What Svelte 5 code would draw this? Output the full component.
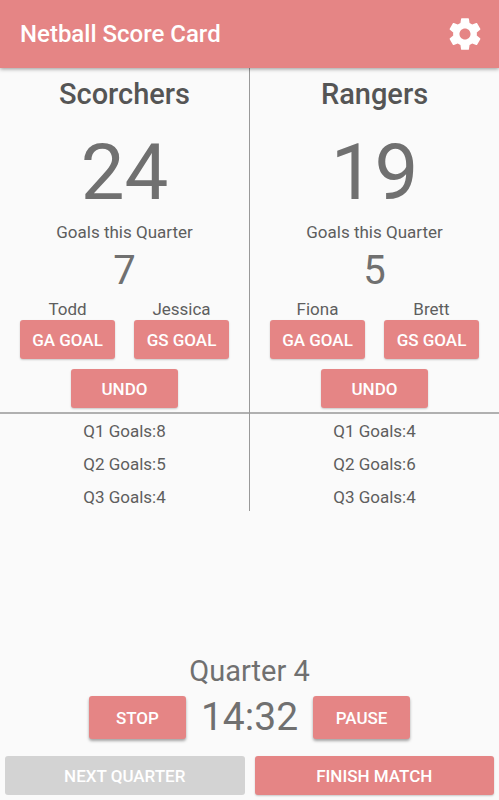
<script>
  let teams = $state([
    {
      name: 'Scorchers',
      score: 24,
      quarterGoals: 7,
      shooters: [
        { name: 'Todd', position: 'GA' },
        { name: 'Jessica', position: 'GS' },
      ],
      history: [8, 5, 4],
    },
    {
      name: 'Rangers',
      score: 19,
      quarterGoals: 5,
      shooters: [
        { name: 'Fiona', position: 'GA' },
        { name: 'Brett', position: 'GS' },
      ],
      history: [4, 6, 4],
    },
  ]);

  const quarter = 4;
  const secondsLeft = 872;

  const clock = $derived(
    `${Math.floor(secondsLeft / 60)}:${String(secondsLeft % 60).padStart(2, '0')}`
  );

  function addGoal(team) {
    team.score += 1;
    team.quarterGoals += 1;
  }

  function undo(team) {
    if (team.quarterGoals === 0) return;
    team.score -= 1;
    team.quarterGoals -= 1;
  }
</script>

<div class="app">
  <header>
    <h1>Netball Score Card</h1>
    <button class="settings" aria-label="Settings">
      <svg viewBox="0 0 24 24" aria-hidden="true">
        <path
          d="M19.43 12.98c.04-.32.07-.64.07-.98s-.03-.66-.07-.98l2.11-1.65c.19-.15.24-.42.12-.64l-2-3.46c-.12-.22-.39-.3-.61-.22l-2.49 1c-.52-.4-1.08-.73-1.69-.98l-.38-2.65C14.46 2.18 14.25 2 14 2h-4c-.25 0-.46.18-.49.42l-.38 2.65c-.61.25-1.17.59-1.69.98l-2.49-1c-.23-.09-.49 0-.61.22l-2 3.46c-.13.22-.07.49.12.64l2.11 1.65c-.04.32-.07.65-.07.98s.03.66.07.98l-2.11 1.65c-.19.15-.24.42-.12.64l2 3.46c.12.22.39.3.61.22l2.49-1c.52.4 1.08.73 1.69.98l.38 2.65c.03.24.24.42.49.42h4c.25 0 .46-.18.49-.42l.38-2.65c.61-.25 1.17-.59 1.69-.98l2.49 1c.23.09.49 0 .61-.22l2-3.46c.12-.22.07-.49-.12-.64l-2.11-1.65zM12 15.5c-1.93 0-3.5-1.57-3.5-3.5s1.57-3.5 3.5-3.5 3.5 1.57 3.5 3.5-1.57 3.5-3.5 3.5z"
        />
      </svg>
    </button>
  </header>

  <main>
    {#each teams as team}
      <section class="team">
        <div class="board">
          <h2>{team.name}</h2>
          <div class="score">{team.score}</div>
          <div class="label">Goals this Quarter</div>
          <div class="quarter-goals">{team.quarterGoals}</div>
          <div class="shooters">
            {#each team.shooters as shooter}
              <div class="shooter">
                <span class="label">{shooter.name}</span>
                <button class="btn" onclick={() => addGoal(team)}>{shooter.position} GOAL</button>
              </div>
            {/each}
          </div>
          <button class="btn undo" onclick={() => undo(team)}>UNDO</button>
        </div>
        <div class="history">
          {#each team.history as goals, i}
            <div class="label">Q{i + 1} Goals:{goals}</div>
          {/each}
        </div>
      </section>
    {/each}
  </main>

  <footer>
    <div class="quarter">Quarter {quarter}</div>
    <div class="timer">
      <button class="btn raised">STOP</button>
      <span class="clock">{clock}</span>
      <button class="btn raised">PAUSE</button>
    </div>
    <div class="actions">
      <button class="btn" disabled>NEXT QUARTER</button>
      <button class="btn">FINISH MATCH</button>
    </div>
  </footer>
</div>

<style>
  :global(body) {
    background: #fafafa;
  }

  .app {
    display: flex;
    flex-direction: column;
    min-height: 100vh;
    box-sizing: border-box;
    font-family: Roboto, sans-serif;
    color: #707070;
  }

  header {
    position: relative;
    display: flex;
    align-items: center;
    justify-content: space-between;
    height: 68px;
    padding: 0 15px 0 20px;
    background: #e58585;
    color: #fff;
    box-shadow: 0 1px 4px rgba(0, 0, 0, 0.4);
  }

  h1 {
    margin: 0;
    font-size: 24px;
    line-height: 32px;
    font-weight: 500;
  }

  .settings {
    display: flex;
    padding: 0;
    border: none;
    background: none;
    cursor: pointer;
  }

  .settings svg {
    width: 38px;
    height: 38px;
    fill: #fff;
  }

  main {
    display: flex;
  }

  .team {
    flex: 1;
    text-align: center;
  }

  .team + .team {
    border-left: 1px solid #999;
  }

  .board {
    display: flex;
    flex-direction: column;
    align-items: center;
    padding: 8px 20px 4px;
    border-bottom: 2px solid #b0b0b0;
  }

  h2 {
    margin: 0;
    font-size: 29px;
    line-height: 36px;
    font-weight: 500;
    color: #555;
  }

  .score {
    font-size: 78px;
    line-height: 92px;
    margin: 15px 0 3px;
  }

  .label {
    font-size: 17px;
    line-height: 20px;
    color: #5e5e5e;
  }

  .quarter-goals {
    font-size: 40px;
    line-height: 48px;
    margin: 5px 0 4px;
  }

  .shooters {
    display: flex;
    gap: 19px;
    align-self: stretch;
    margin-bottom: 10px;
  }

  .shooter {
    flex: 1;
    display: flex;
    flex-direction: column;
    gap: 1px;
  }

  .btn {
    height: 39px;
    padding: 0;
    border: none;
    border-radius: 3px;
    background: #e58585;
    color: #fff;
    font: 500 17px Roboto, sans-serif;
    white-space: nowrap;
    box-shadow: 0 1px 2px rgba(0, 0, 0, 0.2);
    cursor: pointer;
  }

  .btn:disabled {
    background: #d3d3d3;
    box-shadow: none;
    cursor: default;
  }

  .undo {
    width: 107px;
  }

  .history {
    display: flex;
    flex-direction: column;
    gap: 13px;
    padding: 7px 0 4px;
  }

  footer {
    margin-top: auto;
    padding: 0 5px 5px;
  }

  .quarter {
    font-size: 29px;
    line-height: 36px;
    text-align: center;
  }

  .timer {
    display: flex;
    align-items: center;
    justify-content: center;
    gap: 15px;
    margin: 7px 0 17px;
  }

  .raised {
    width: 97px;
    height: 43px;
    box-shadow: 0 2px 3px rgba(0, 0, 0, 0.35);
  }

  .clock {
    font-size: 39px;
    line-height: 43px;
  }

  .actions {
    display: flex;
    gap: 10px;
  }

  .actions .btn {
    flex: 1;
  }
</style>
